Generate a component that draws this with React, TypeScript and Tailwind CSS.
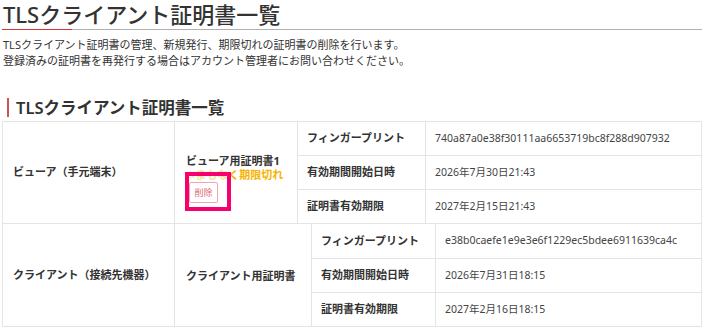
import React from "react";

type Item = { label: string; value: string };

type Cert = {
  device: string;
  name: string;
  warn?: boolean;
  items: Item[];
  col2: string;
  label: string;
  heights: string[];
};

const certs: Cert[] = [
  {
    device: "ビューア（手元端末）",
    name: "ビューア用証明書1",
    warn: true,
    col2: "w-[123px]",
    label: "w-[128px]",
    heights: ["h-[33px]", "h-[34px]", "h-[34px]"],
    items: [
      { label: "フィンガープリント", value: "740a87a0e38f30111aa6653719bc8f288d907932" },
      { label: "有効期間開始日時", value: "2026年7月30日21:43" },
      { label: "証明書有効期限", value: "2027年2月15日21:43" },
    ],
  },
  {
    device: "クライアント（接続先機器）",
    name: "クライアント用証明書",
    col2: "w-[137px]",
    label: "w-[124px]",
    heights: ["h-[34px]", "h-[34px]", "h-[34px]"],
    items: [
      { label: "フィンガープリント", value: "e38b0caefe1e9e3e6f1229ec5bdee6911639ca4c" },
      { label: "有効期間開始日時", value: "2026年7月31日18:15" },
      { label: "証明書有効期限", value: "2027年2月16日18:15" },
    ],
  },
];

function CertRow({ c }: { c: Cert }) {
  return (
    <div className="flex border-b border-l border-r border-[#e4e4e4]">
      <div className="w-[172px] shrink-0 flex items-center pl-[10px] text-[11px] font-bold border-r border-[#e4e4e4]">
        {c.device}
      </div>
      <div
        className={`${c.col2} shrink-0 relative flex flex-col justify-center pl-[11px] border-r border-[#e4e4e4] ${
          c.warn ? "pt-[10px]" : ""
        }`}
      >
        <div className="text-[11px] font-bold leading-[15px]">{c.name}</div>
        {c.warn && (
          <>
            <div className="text-[11px] font-bold leading-[13px] text-[#f5b400]">
              <span className="text-[#fbe3a0]">※まもな</span>く期限切れ
            </div>
            <button className="mt-[1px] ml-[3px] w-[29px] h-[21px] rounded-[2px] border border-[#f3a6ae] bg-white text-[9px] leading-none text-[#e26a78]">
              削除
            </button>
            {/* highlight box */}
            <div className="absolute left-[10px] top-[50px] w-[46px] h-[39px] border-[4px] border-[#f4006f]" />
          </>
        )}
      </div>
      <div className="flex-1 flex flex-col">
        {c.items.map((it, i) => (
          <div key={it.label} className={`flex ${c.heights[i]} ${i > 0 ? "border-t border-[#e4e4e4]" : ""}`}>
            <div className={`${c.label} shrink-0 flex items-center pl-[9px] text-[11px] font-bold border-r border-[#e4e4e4]`}>
              {it.label}
            </div>
            <div className="flex-1 flex items-center pl-[9px] text-[10.5px] text-[#444]">{it.value}</div>
          </div>
        ))}
      </div>
    </div>
  );
}

export default function App() {
  return (
    <div
      className="w-[704px] h-[331px] overflow-hidden bg-white text-[#333]"
      style={{ fontFamily: '"Noto Sans", "Noto Sans CJK JP", sans-serif' }}
    >
      <h1 className="px-[3px] text-[22px] font-medium leading-[29px]">TLSクライアント証明書一覧</h1>
      <div className="flex h-px mx-[2px]">
        <div className="w-[70px] bg-[#d8343c]" />
        <div className="flex-1 bg-[#b0b0b0]" />
      </div>
      <p className="mt-[7px] px-[3px] text-[11px] leading-[16px]">
        TLSクライアント証明書の管理、新規発行、期限切れの証明書の削除を行います。
        <br />
        登録済みの証明書を再発行する場合はアカウント管理者にお問い合わせください。
      </p>
      <h2 className="mt-[29px] ml-[7px] border-l-[2px] border-[#cc5257] pl-[7px] text-[16.5px] font-semibold leading-[19px]">
        TLSクライアント証明書一覧
      </h2>
      <div className="mt-[4px] mx-[2px] border-t border-[#e4e4e4]">
        {certs.map((c) => (
          <CertRow key={c.device} c={c} />
        ))}
      </div>
    </div>
  );
}
